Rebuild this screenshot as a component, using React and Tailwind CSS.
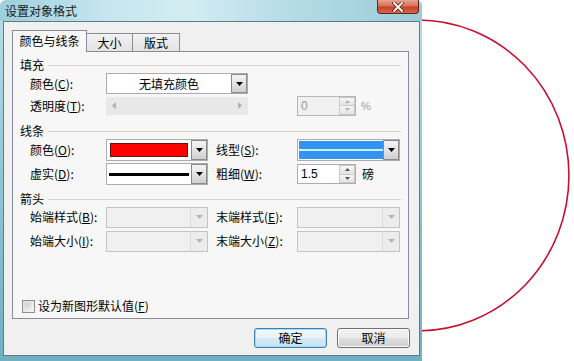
import React from "react";

const FONT = "font-['Noto_Sans_CJK_SC','Liberation_Sans',sans-serif]";
const NUM = "font-['Liberation_Sans','DejaVu_Sans',sans-serif]";

function Tri({ color = "#000", dir = "down" }) {
  if (dir === "left")
    return (
      <svg width="4" height="7" viewBox="0 0 4 7">
        <path d="M4 0V7L0 3.5Z" fill={color} />
      </svg>
    );
  if (dir === "right")
    return (
      <svg width="4" height="7" viewBox="0 0 4 7">
        <path d="M0 0V7L4 3.5Z" fill={color} />
      </svg>
    );
  if (dir === "up")
    return (
      <svg width="5" height="3" viewBox="0 0 5 3">
        <path d="M0 3H5L2.5 0Z" fill={color} />
      </svg>
    );
  if (dir === "smalldown")
    return (
      <svg width="5" height="3" viewBox="0 0 5 3">
        <path d="M0 0H5L2.5 3Z" fill={color} />
      </svg>
    );
  return (
    <svg width="7" height="4" viewBox="0 0 7 4">
      <path d="M0 0H7L3.5 4Z" fill={color} />
    </svg>
  );
}

function DropBtn({ disabled }) {
  if (disabled)
    return (
      <div className="w-[17px] h-full border-l border-[#d9d9d9] bg-[#ededed] flex items-center justify-center">
        <Tri color="#b4b4b4" />
      </div>
    );
  return (
    <div className="w-[16px] h-full border border-[#8a8a8a] bg-[linear-gradient(#f4f4f4,#e3e3e3_50%,#d0d0d0)] flex items-center justify-center">
      <Tri />
    </div>
  );
}

function Combo({ w, h, children, disabled }) {
  return (
    <div
      className={`${w} ${h} flex border ${
        disabled ? "border-[#c4c4c4] bg-[#f0f0f0]" : "border-[#abadb3] bg-white"
      }`}
    >
      <div className="flex-1 min-w-0 h-full flex items-center">{children}</div>
      <DropBtn disabled={disabled} />
    </div>
  );
}

function Spin({ value, disabled }) {
  return (
    <div
      className={`w-[59px] h-[20px] flex border ${
        disabled ? "border-[#b5b5b5] bg-[#f0f0f0]" : "border-[#abadb3] bg-white"
      }`}
    >
      <div
        className={`flex-1 pl-[3px] flex items-center text-[12px] ${NUM} ${
          disabled ? "text-[#9a9a9a]" : "text-black"
        }`}
      >
        {value}
      </div>
      <div className="w-[16px] h-full flex flex-col">
        <div className="flex-1 border border-[#c9c9c9] bg-[linear-gradient(#f6f6f6,#e4e4e4)] flex items-center justify-center">
          <Tri dir="up" color={disabled ? "#b0b0b0" : "#555"} />
        </div>
        <div className="flex-1 border border-t-0 border-[#c9c9c9] bg-[linear-gradient(#f6f6f6,#e4e4e4)] flex items-center justify-center">
          <Tri dir="smalldown" color={disabled ? "#b0b0b0" : "#555"} />
        </div>
      </div>
    </div>
  );
}

function Group({ label, className = "" }) {
  return (
    <div className={`flex items-center h-[14px] pl-[7px] pr-[7px] ${className}`}>
      <span>{label}</span>
      <div className="flex-1 h-px bg-[#d8d3c4] ml-[4px]" />
    </div>
  );
}

function L({ text, k }) {
  return (
    <span className="whitespace-nowrap">
      {text}(<u>{k}</u>):
    </span>
  );
}

export default function App() {
  return (
    <div className={`relative w-[574px] h-[361px] bg-white overflow-hidden text-[12px] leading-[14px] text-black ${FONT}`}>
      <svg className="absolute left-0 top-0" width="574" height="361" viewBox="0 0 574 361">
        <path d="M418 20 A151 155.5 0 0 1 418 331" fill="none" stroke="#c8102e" strokeWidth="1.6" />
      </svg>

      <div className="relative w-[422px] h-[361px] flex flex-col rounded-tl-[6px] rounded-tr-[6px] bg-[linear-gradient(#b9e0ea,#8fc6d4_50%,#6fb1c2)]">
        {/* title bar */}
        <div className="relative h-[21px] flex items-start bg-[linear-gradient(90deg,#9ccfdc_0%,#c6e6ee_25%,#d3ecf2_45%,#b3dbe6_70%,#9ccbd8_100%)] rounded-tl-[6px] rounded-tr-[6px]">
          <div className="pl-[5px] pt-[4px] text-[12px] leading-[14px] text-[#1b1b1b]">设置对象格式</div>
          <div className="ml-auto mr-[3px] w-[42px] h-[14px] rounded-b-[4px] border border-t-0 border-[#5e2519] bg-[linear-gradient(#e8a48f,#d7705a_45%,#c5412a_55%,#d9664a)] flex items-center justify-center">
            <svg width="12" height="10" viewBox="0 0 12 10">
              <path d="M2 1L10 9M10 1L2 9" stroke="#5a2a20" strokeWidth="3.4" strokeLinecap="square" />
              <path d="M2 1L10 9M10 1L2 9" stroke="#ffffff" strokeWidth="1.8" strokeLinecap="square" />
            </svg>
          </div>
        </div>

        {/* client */}
        <div className="ml-[3px] w-[417px] h-[335px] border border-[#587e8b] bg-[#f0f0f0] flex flex-col pl-[8px] pt-[8px]">
          {/* tabs */}
          <div className="flex items-end h-[21px]">
            <div className="relative z-10 -mb-px w-[75px] h-[22px] border border-b-0 border-[#898c95] bg-[#f7f7f7] flex items-center justify-center pb-[1px]">
              颜色与线条
            </div>
            <div className="w-[46px] h-[18px] border border-b-0 border-l-0 border-[#898c95] bg-[linear-gradient(#f2f2f2,#e3e3e3)] flex items-center justify-center">
              大小
            </div>
            <div className="w-[47px] h-[18px] border border-b-0 border-l-0 border-[#898c95] bg-[linear-gradient(#f2f2f2,#e3e3e3)] flex items-center justify-center">
              版式
            </div>
          </div>

          {/* panel */}
          <div className="w-[397px] h-[268px] border border-[#898c95] bg-[#f7f7f7] flex flex-col">
            <Group label="填充" className="mt-[6px]" />

            <div className="flex items-center h-[21px] mt-[1px] pl-[17px]">
              <div className="w-[76px]">
                <L text="颜色" k="C" />
              </div>
              <Combo w="w-[142px]" h="h-[21px]">
                <div className="w-full text-center">无填充颜色</div>
              </Combo>
            </div>

            <div className="flex items-center h-[19px] mt-[2px] pl-[17px]">
              <div className="w-[76px]">
                <L text="透明度" k="T" />
              </div>
              <div className="w-[142px] h-[18px] bg-[#e8e8e8] flex items-center justify-between px-[6px]">
                <Tri dir="left" color="#b0b0b0" />
                <Tri dir="right" color="#b0b0b0" />
              </div>
              <div className="ml-[49px]">
                <Spin value="0" disabled />
              </div>
              <span className={`ml-[5px] text-[#a0a0a0] text-[11px] ${NUM}`}>%</span>
            </div>

            <Group label="线条" className="mt-[9px]" />

            <div className="flex items-center h-[23px] pl-[17px]">
              <div className="w-[76px]">
                <L text="颜色" k="O" />
              </div>
              <Combo w="w-[102px]" h="h-[22px]">
                <div className="ml-[3px] w-[78px] h-[14px] bg-[#ff0000] border border-[#6b1010]" />
              </Combo>
              <div className="w-[81px] ml-[8px]">
                <L text="线型" k="S" />
              </div>
              <Combo w="w-[103px]" h="h-[22px]">
                <div className="ml-[1px] w-full h-[18px] bg-[#3393f0] flex items-center">
                  <div className="w-full h-[2px] bg-[#c6f3ff]" />
                </div>
              </Combo>
            </div>

            <div className="flex items-center h-[22px] mt-[2px] pl-[17px]">
              <div className="w-[76px]">
                <L text="虚实" k="D" />
              </div>
              <Combo w="w-[102px]" h="h-[22px]">
                <div className="ml-[2px] w-[80px] h-[3px] bg-black" />
              </Combo>
              <div className="w-[81px] ml-[8px]">
                <L text="粗细" k="W" />
              </div>
              <Spin value="1.5" />
              <span className="ml-[6px]">磅</span>
            </div>

            <Group label="箭头" className="mt-[7px]" />

            <div className="flex items-center h-[22px] pl-[17px]">
              <div className="w-[76px]">
                <L text="始端样式" k="B" />
              </div>
              <Combo w="w-[102px]" h="h-[21px]" disabled />
              <div className="w-[81px] ml-[8px]">
                <L text="末端样式" k="E" />
              </div>
              <Combo w="w-[103px]" h="h-[21px]" disabled />
            </div>

            <div className="flex items-center h-[22px] mt-[2px] pl-[17px]">
              <div className="w-[76px]">
                <L text="始端大小" k="I" />
              </div>
              <Combo w="w-[102px]" h="h-[21px]" disabled />
              <div className="w-[81px] ml-[8px]">
                <L text="末端大小" k="Z" />
              </div>
              <Combo w="w-[103px]" h="h-[21px]" disabled />
            </div>

            <div className="flex items-center h-[14px] mt-[47px] pl-[9px]">
              <div className="w-[13px] h-[13px] border border-[#8e8f8f] bg-[linear-gradient(135deg,#dcdcdc,#f6f6f6)] p-[2px]">
                <div className="w-full h-full bg-[linear-gradient(135deg,#cfcfcf,#f0f0f0)]" />
              </div>
              <span className="ml-[3px]">
                设为新图形默认值(<u>F</u>)
              </span>
            </div>
          </div>

          {/* buttons */}
          <div className="flex justify-end gap-[10px] pr-[9px] mt-[9px]">
            <div className="w-[73px] h-[20px] rounded-[3px] border border-[#3c7fb1] bg-[linear-gradient(#f3f9fc,#e6f2f9_48%,#d5eaf6_52%,#c6e2f3)] shadow-[inset_0_0_0_1px_#a8dbf5] flex items-center justify-center">
              确定
            </div>
            <div className="w-[73px] h-[20px] rounded-[3px] border border-[#707070] bg-[linear-gradient(#f2f2f2,#ebebeb_48%,#dddddd_52%,#cfcfcf)] shadow-[inset_0_0_0_1px_#fbfbfb] flex items-center justify-center">
              取消
            </div>
          </div>
        </div>
      </div>
    </div>
  );
}
